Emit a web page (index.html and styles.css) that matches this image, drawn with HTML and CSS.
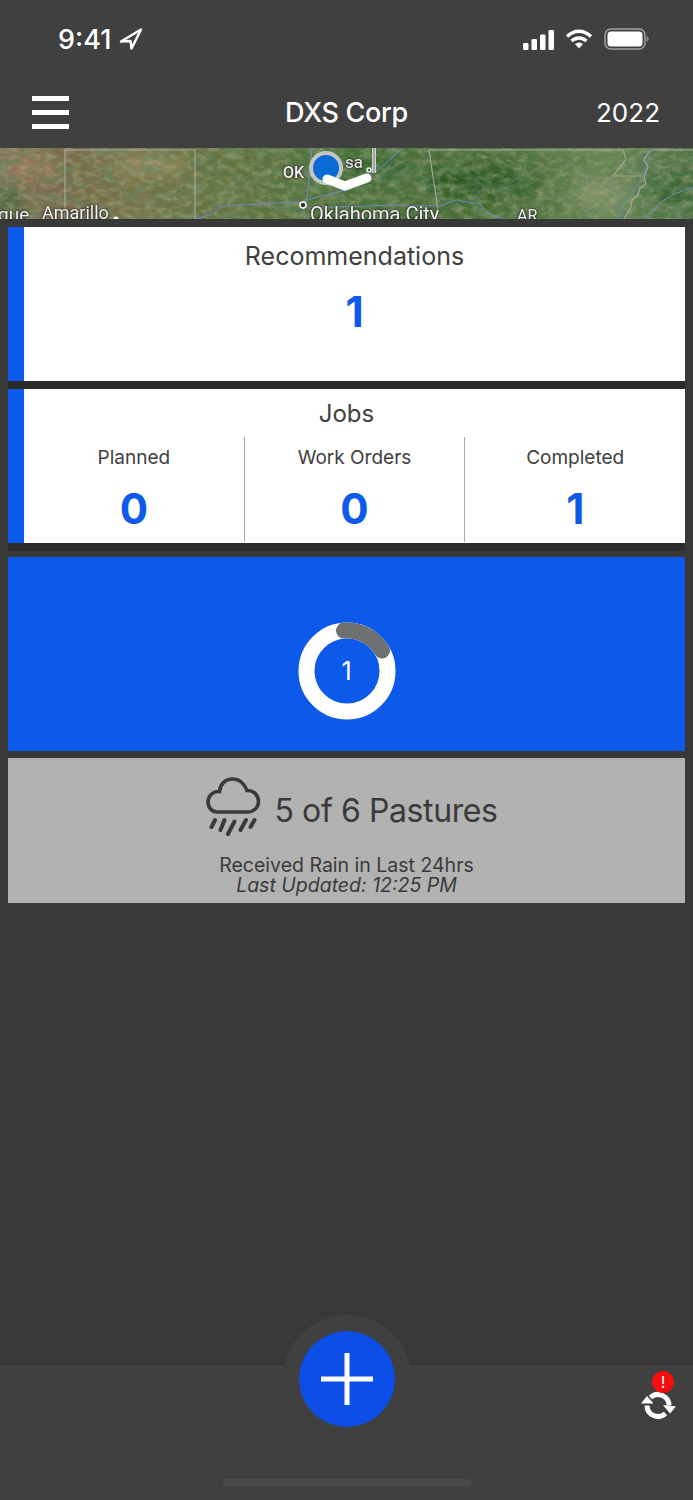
FILE: index.html
```html
<!DOCTYPE html>
<html lang="en">

<head>
    <meta charset="UTF-8">
    <meta name="viewport" content="width=device-width, initial-scale=1.0">
    <title>DXS Corp</title>
    <link rel="stylesheet" href="styles.css">
</head>

<body>
    <div class="app">
        <header class="top">
            <div class="status-bar">
                <div class="clock">
                    <span>9:41</span>
                    <svg width="24" height="22" viewBox="0 0 24 22">
                        <path d="M22 1.500 2 13.500 11.500 13 12.500 20.500Z" fill="none" stroke="#fff" stroke-width="2.500" stroke-linejoin="round"/>
                    </svg>
                </div>
                <div class="status-icons">
                    <svg class="signal" width="33" height="21" viewBox="0 0 33 21">
                        <rect x="1" y="14" width="5.500" height="7" rx="1.300" fill="#fff"/>
                        <rect x="9.500" y="10" width="5.500" height="11" rx="1.300" fill="#fff"/>
                        <rect x="18" y="5.500" width="5.500" height="15.500" rx="1.300" fill="#fff"/>
                        <rect x="26.500" y="1" width="5.500" height="20" rx="1.300" fill="#fff"/>
                    </svg>
                    <svg class="wifi" width="28" height="20" viewBox="0 0 28 20">
                        <path d="M2 7.500C9.500 .5 18.500 .5 26 7.500M6.500 12C11 8 17 8 21.500 12" fill="none" stroke="#fff" stroke-width="3.400"/>
                        <path d="M10 15c2.500-2 5.500-2 8 0l-4 4.500Z" fill="#fff"/>
                    </svg>
                    <svg width="45" height="22" viewBox="0 0 45 22">
                        <rect x="1" y="1" width="40" height="20" rx="6" fill="none" stroke="#a0a0a0" stroke-width="1.500"/>
                        <rect x="3.500" y="3.500" width="35" height="15" rx="3.500" fill="#fff"/>
                        <path d="M42.500 8v6c1.500-.5 2.200-1.700 2.200-3s-.7-2.500-2.200-3Z" fill="#8a8a8a"/>
                    </svg>
                </div>
            </div>
            <nav class="nav-bar">
                <div class="hamburger"><span></span><span></span><span></span></div>
                <div class="nav-title">DXS Corp</div>
                <div class="nav-year">2022</div>
            </nav>
        </header>

        <div class="map">
            <svg class="map-art" width="693" height="71" viewBox="0 0 693 71">
                <defs>
                    <linearGradient id="land" x1="0" x2="1" y1="0" y2="0">
                        <stop offset="0" stop-color="#7f7458"/>
                        <stop offset=".09" stop-color="#7a6c4c"/>
                        <stop offset=".2" stop-color="#75734a"/>
                        <stop offset=".32" stop-color="#637542"/>
                        <stop offset=".5" stop-color="#4c733b"/>
                        <stop offset=".7" stop-color="#476d36"/>
                        <stop offset=".88" stop-color="#668553"/>
                        <stop offset="1" stop-color="#4c7144"/>
                    </linearGradient>
                    <filter id="grain-dark" x="0" y="0" width="100%" height="100%">
                        <feTurbulence type="fractalNoise" baseFrequency=".07 .11" numOctaves="5" seed="7"/>
                        <feColorMatrix values="0 0 0 0 .14  0 0 0 0 .24  0 0 0 0 .12  2 0 0 0 -.8"/>
                    </filter>
                    <filter id="grain-tan" x="0" y="0" width="100%" height="100%">
                        <feTurbulence type="fractalNoise" baseFrequency=".11 .17" numOctaves="4" seed="23"/>
                        <feColorMatrix values="0 0 0 0 .68  0 0 0 0 .52  0 0 0 0 .32  0 2 0 0 -.85"/>
                    </filter>
                    <filter id="soft">
                        <feGaussianBlur stdDeviation="7"/>
                    </filter>
                </defs>
                <rect width="693" height="71" fill="url(#land)"/>
                <g filter="url(#soft)">
                    <ellipse cx="480" cy="34" rx="62" ry="15" fill="#2a5a26" opacity=".9"/>
                    <ellipse cx="380" cy="20" rx="35" ry="14" fill="#2f6030" opacity=".6"/>
                    <ellipse cx="8" cy="52" rx="14" ry="12" fill="#38602f" opacity=".8"/>
                    <ellipse cx="150" cy="18" rx="40" ry="10" fill="#ab9a68" opacity=".55"/>
                    <ellipse cx="30" cy="18" rx="26" ry="14" fill="#a07c58" opacity=".7"/>
                    <ellipse cx="600" cy="46" rx="30" ry="18" fill="#86986c" opacity=".7"/>
                    <ellipse cx="670" cy="42" rx="25" ry="15" fill="#2f5f2e" opacity=".7"/>
                </g>
                <rect width="693" height="71" filter="url(#grain-dark)"/>
                <rect width="693" height="71" filter="url(#grain-tan)" opacity=".4"/>
                <g fill="none" stroke="#a3a69e" stroke-width="1.200">
                    <path d="M65 71V2H195V71"/>
                    <path d="M438 62 429 2H623L626 11 613 28H643"/>
                    <path d="M650 2H693M650 2 644 12 648 19 644 28 646 36 640 40 638 47 632 52 631 59 624 71"/>
                </g>
                <g fill="none" stroke="#6d8cc0" stroke-width="1">
                    <path d="M195 71 213 66 222 58 295 54 303 57"/>
                    <path d="M312 0 307 50 303 57 305 71"/>
                    <path d="M306 52 350 41 380 20 403 0"/>
                    <path d="M308 60 393 57 440 58 456 52 480 56 486 64 503 71"/>
                    <path d="M620 71 620 60 643 30 650 5 654 0"/>
                    <path d="M643 71 663 53C673 46 683 42 693 40"/>
                </g>
                <path d="M374 0V25" stroke="#d2d2d0" stroke-width="4" fill="none"/>
                <path d="M374 0V25" stroke="#777" stroke-width="1" fill="none"/>
                <circle cx="369" cy="22" r="2" fill="none" stroke="#eee" stroke-width="1.500"/>
                <circle cx="303" cy="57" r="3" fill="#333" stroke="#fff" stroke-width="1.500"/>
                <circle cx="116" cy="71" r="2.500" fill="#fff"/>
                <circle cx="326" cy="20" r="15" fill="#0a6bd6" stroke="#c4c6c4" stroke-width="4"/>
                <path d="M327 31 345 38 367 30" fill="none" stroke="#fff" stroke-width="9" stroke-linecap="round" stroke-linejoin="round"/>
            </svg>
            <span class="map-label label-ok">OK</span>
            <span class="map-label label-tulsa">sa</span>
            <span class="map-label label-gue">gue</span>
            <span class="map-label label-amarillo">Amarillo</span>
            <span class="map-label label-okc">Oklahoma City</span>
            <span class="map-label label-ar">AR</span>
        </div>

        <main class="cards">
            <div class="card-stack">
                <section class="card">
                    <h2 class="card-title rec-title">Recommendations</h2>
                    <div class="big-num rec-num">1</div>
                </section>

                <section class="card">
                    <h2 class="card-title jobs-title">Jobs</h2>
                    <div class="job-cols">
                        <div class="job-col">
                            <div class="job-label">Planned</div>
                            <div class="big-num">0</div>
                        </div>
                        <div class="job-col">
                            <div class="job-label">Work Orders</div>
                            <div class="big-num">0</div>
                        </div>
                        <div class="job-col">
                            <div class="job-label">Completed</div>
                            <div class="big-num">1</div>
                        </div>
                    </div>
                </section>
            </div>

            <section class="blue-panel">
                <div class="ring">
                    <svg width="98" height="98" viewBox="0 0 98 98">
                        <circle cx="49" cy="49" r="40.500" fill="none" stroke="#fff" stroke-width="16"/>
                        <path d="M46 8.600A40.500 40.500 0 0 1 84 28.500" fill="none" stroke="#6f7072" stroke-width="16" stroke-linecap="round"/>
                    </svg>
                    <span class="ring-num">1</span>
                </div>
            </section>

            <section class="rain-panel">
                <div class="rain-main">
                    <svg width="56" height="62" viewBox="0 0 56 62">
                        <path d="M11 36H42C48.500 36 52.500 30.500 52.500 25.500 52.500 19 47 14 41 14.500 38 7 33 3 27 3 19 3 14 8.500 13.500 15.500 7 15 2 20 2 26 2 31.500 6 36 11 36Z" fill="none" stroke="#3a3a3a" stroke-width="3.600"/>
                        <path d="M5.500 51 9 44M14.500 54 18.500 44M22 58 28.500 45.500M34.500 54 40 44M44.500 51 48.500 44" fill="none" stroke="#3a3a3a" stroke-width="4" stroke-linecap="round"/>
                    </svg>
                    <span class="rain-count">5 of 6 Pastures</span>
                </div>
                <div class="rain-sub">Received Rain in Last 24hrs</div>
                <div class="rain-updated">Last Updated: 12:25 PM</div>
            </section>
        </main>

        <footer class="tab-bar">
            <button class="fab">
                <svg width="52" height="52" viewBox="0 0 52 52">
                    <path d="M26 0V52M0 26H52" stroke="#fff" stroke-width="5"/>
                </svg>
            </button>
            <div class="sync">
                <svg width="36" height="30" viewBox="0 0 36 30">
                    <path d="M9.500 7.500A11 11 0 0 1 28 15.500M24.500 23.500A11 11 0 0 1 6 15.500" fill="none" stroke="#fff" stroke-width="5"/>
                    <path d="M0 13.500 6 6 12.500 13.500ZM22 15 35 16.500 29 23.500Z" fill="#fff"/>
                </svg>
                <span class="sync-badge">!</span>
            </div>
            <div class="home-indicator"></div>
        </footer>
    </div>
</body>

</html>
```

FILE: styles.css
```css
* {
    box-sizing: border-box;
}

html, body {
    margin: 0;
    padding: 0;
}

body {
    font-family: Inter, "Liberation Sans", sans-serif;
    background: #383838;
}

.app {
    width: 693px;
    height: 1500px;
    display: flex;
    flex-direction: column;
    overflow: hidden;
}

.top {
    height: 148px;
    background: #404040;
    color: #fff;
}

.status-bar {
    height: 78px;
    display: flex;
    justify-content: space-between;
    align-items: center;
    padding: 0 44px 0 58px;
}

.clock {
    display: flex;
    align-items: center;
    gap: 8px;
    font-size: 27px;
    font-weight: 500;
}

.status-icons {
    display: flex;
    align-items: center;
}

.signal {
    margin-right: 10px;
}

.wifi {
    margin-right: 11px;
}

.nav-bar {
    height: 70px;
    display: flex;
    align-items: center;
    justify-content: space-between;
    position: relative;
    padding: 0 33px 2px 32px;
}

.hamburger {
    width: 37px;
    display: flex;
    flex-direction: column;
    gap: 9px;
}

.hamburger span {
    height: 5px;
    background: #fff;
}

.nav-title {
    font-size: 27px;
    font-weight: 500;
    position: absolute;
    left: 0;
    right: 0;
    text-align: center;
    letter-spacing: -.3px;
}

.nav-year {
    font-size: 26px;
}

.map {
    height: 71px;
    position: relative;
    overflow: hidden;
}

.map-art {
    display: block;
}

.map-label {
    position: absolute;
    color: #f0f0f0;
    font-family: Roboto, "Liberation Sans", sans-serif;
    font-size: 19px;
    line-height: 22px;
    text-shadow: 0 0 3px #222, 0 0 2px #222;
    white-space: nowrap;
}

.label-ok { left: 283px; top: 14px; font-size: 16px; font-weight: 500; }
.label-tulsa { left: 345px; top: 3px; font-size: 17px; }
.label-gue { left: -2px; top: 56px; }
.label-amarillo { left: 42px; top: 54px; font-size: 18px; }
.label-okc { left: 310px; top: 55px; font-size: 20px; }
.label-ar { left: 517px; top: 57px; font-size: 16px; }

.cards {
    flex: 1;
    padding: 8px 8px 0;
    background: #383838;
}

.card-stack {
    background: #2b2b2b;
    padding-bottom: 8px;
    display: flex;
    flex-direction: column;
    gap: 8px;
}

.card {
    height: 154px;
    background: #fff;
    border-left: 16px solid #0d59ea;
    text-align: center;
    color: #404040;
}

.card-title {
    font-size: 24px;
    font-weight: 400;
    margin: 0;
    padding-top: 10px;
    line-height: 29px;
}

.rec-title {
    font-size: 25px;
    padding-top: 15px;
}

.jobs-title {
    padding-right: 16px;
}

.big-num {
    font-size: 42px;
    font-weight: 700;
    color: #0d59ea;
    line-height: 48px;
}

.rec-num {
    margin-top: 17px;
}

.job-cols {
    display: flex;
    height: 105px;
    margin-top: 9px;
}

.job-col {
    flex: 1;
    border-right: 1px solid #a8a8a8;
    padding-top: 9px;
}

.job-col:last-child {
    border-right: 0;
}

.job-label {
    font-size: 19px;
    line-height: 23px;
    margin-bottom: 16px;
}

.blue-panel {
    height: 194px;
    margin-top: 6px;
    background: #0d59ea;
    display: flex;
    align-items: center;
    justify-content: center;
    padding-top: 34px;
}

.ring {
    width: 98px;
    height: 98px;
    position: relative;
}

.ring svg {
    display: block;
}

.ring-num {
    position: absolute;
    inset: 0;
    display: flex;
    align-items: center;
    justify-content: center;
    color: #fff;
    font-size: 25px;
}

.rain-panel {
    height: 145px;
    margin-top: 7px;
    background: #b2b2b2;
    color: #3a3a3a;
    text-align: center;
}

.rain-main {
    display: flex;
    align-items: flex-start;
    justify-content: center;
    gap: 12px;
    height: 84px;
    padding: 18px 0 0 11px;
}

.rain-count {
    font-size: 32px;
    line-height: 40px;
    margin-top: 15px;
    letter-spacing: -.4px;
}

.rain-sub {
    font-size: 19.5px;
    line-height: 20px;
    margin-top: 13px;
}

.rain-updated {
    font-size: 19.5px;
    line-height: 20px;
    font-style: italic;
}

.tab-bar {
    height: 135px;
    background: #404040;
    position: relative;
    box-shadow: 0 -1px 0 #333;
}

.fab {
    position: absolute;
    left: 283px;
    top: -50px;
    width: 128px;
    height: 128px;
    border: 16px solid #404040;
    border-radius: 50%;
    background: #0d4fe6;
    background-clip: padding-box;
    padding: 0;
    display: flex;
    align-items: center;
    justify-content: center;
}

.sync {
    position: absolute;
    right: 16px;
    top: 25px;
    width: 36px;
    height: 30px;
}

.sync svg {
    display: block;
}

.sync-badge {
    position: absolute;
    left: 11px;
    top: -19px;
    width: 22px;
    height: 22px;
    border-radius: 50%;
    background: #f60d0d;
    color: #fff;
    font-size: 16px;
    line-height: 22px;
    text-align: center;
}

.home-indicator {
    position: absolute;
    left: 223px;
    top: 114px;
    width: 248px;
    height: 8px;
    border-radius: 4px;
    background: #494949;
}
```
